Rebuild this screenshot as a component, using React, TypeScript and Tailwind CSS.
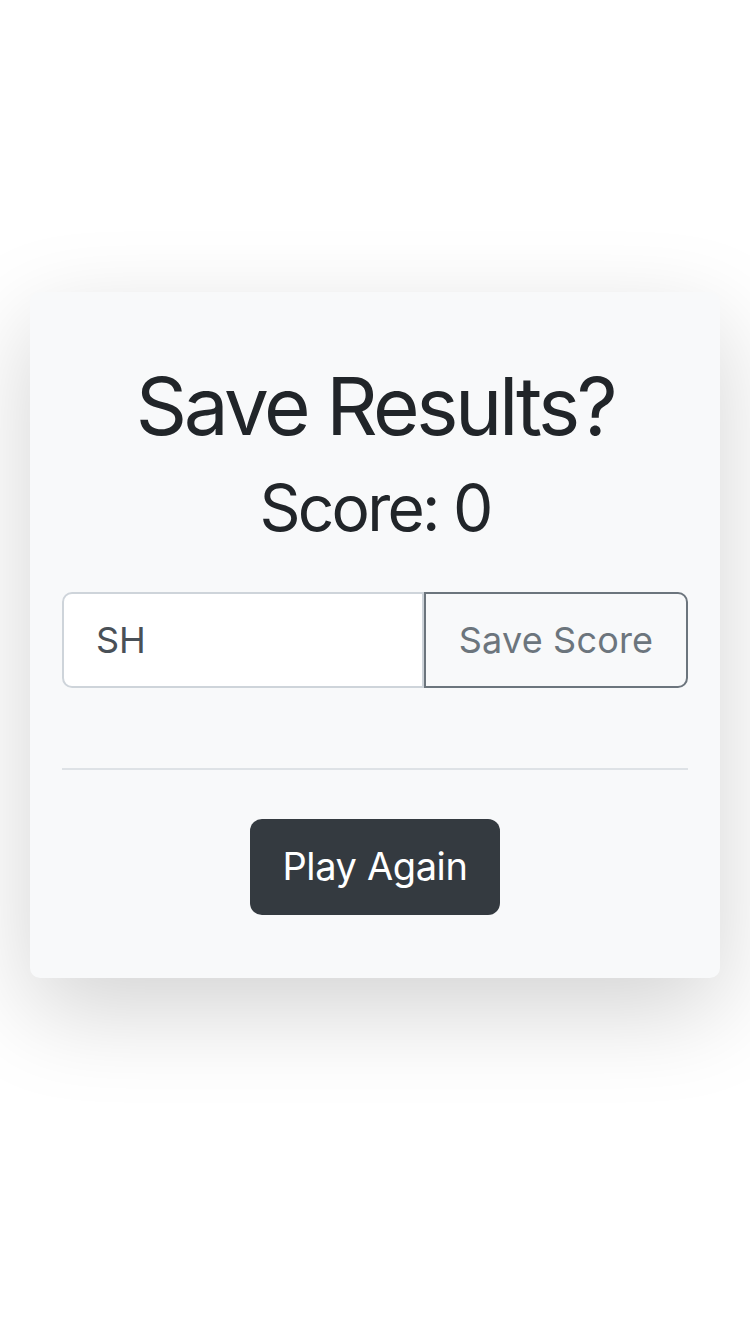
export default function App() {
  return (
    <div className="min-h-[1334px] w-[750px] bg-white pt-[292px] px-[30px] font-['Inter',sans-serif]">
      <div className="bg-[#f8f9fa] rounded-[10px] shadow-[0_32px_96px_rgba(0,0,0,0.175)] px-[32px] pt-[66px] pb-[63px] flex flex-col items-center text-[#212529]">
        <h1 className="text-[80px] leading-[1.2] font-normal tracking-[-0.043em] mb-[16px]">Save Results?</h1>
        <h2 className="text-[64px] leading-[1.2] font-normal tracking-[-0.043em]">Score: 0</h2>
        <div className="mt-[45px] flex w-full h-[96px]">
          <input
            defaultValue="SH"
            className="flex-1 min-w-0 bg-white border-2 border-[#ced4da] rounded-l-[10px] px-[32px] text-[36px] text-[#495057] outline-none"
          />
          <button className="w-[264px] border-2 border-[#6c757d] rounded-r-[10px] text-[36px] tracking-[0.005em] text-[#6c757d] bg-transparent">
            Save Score
          </button>
        </div>
        <hr className="w-full mt-[80px] border-t-2 border-[#dee2e6]" />
        <button className="mt-[49px] w-[250px] h-[96px] rounded-[12px] bg-[#343a40] text-white text-[38px] tracking-[-0.01em]">
          Play Again
        </button>
      </div>
    </div>
  );
}
